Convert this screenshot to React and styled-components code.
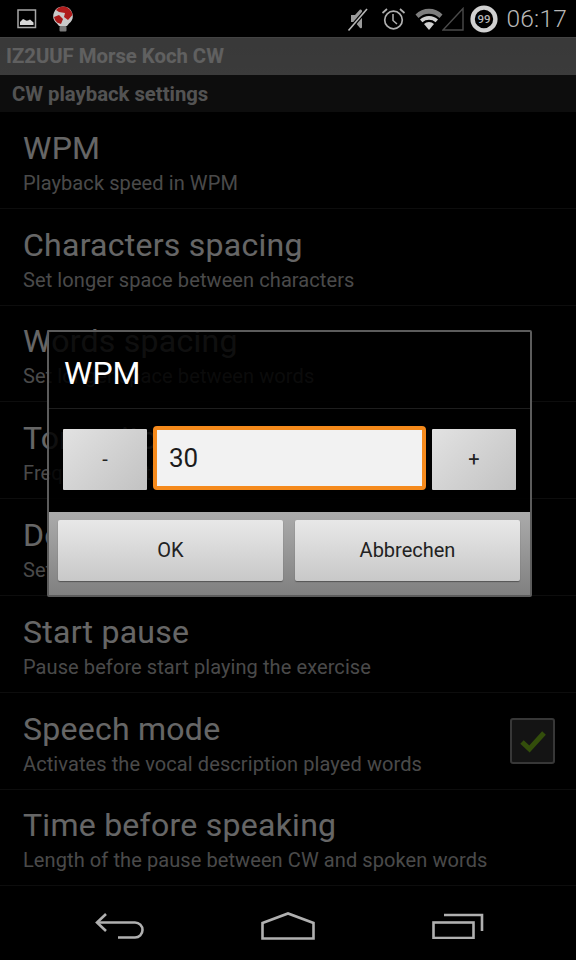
import React from "react";
import styled, { createGlobalStyle } from "styled-components";

const Global = createGlobalStyle`
  html, body { margin: 0; padding: 0; background: #000; }
  body { font-family: Roboto, "Noto Sans", sans-serif; }
  * { box-sizing: border-box; }
`;

const Screen = styled.div`
  width: 576px; height: 960px; display: flex; flex-direction: column;
  background: #000; overflow: hidden; position: relative;
`;
const StatusBar = styled.div`
  height: 37px; flex: none; display: flex; align-items: center; padding: 0 9px 0 17px;
`;
const StatusLeft = styled.div`
  display: flex; align-items: center; gap: 16px; flex: 1;
`;
const StatusRight = styled.div`
  display: flex; align-items: center; height: 37px;
`;
const Clock = styled.span`
  font-size: 24.5px; font-weight: 300; color: #b8b8b8; margin-left: 8px; letter-spacing: 0.2px; line-height: 37px;
`;
const Stage = styled.div`
  position: relative; flex: 1; display: flex; flex-direction: column; min-height: 0;
`;
const ActionBar = styled.div`
  height: 38px; flex: none; display: flex; align-items: center; padding-left: 6px;
  background: linear-gradient(#a8a8a8 0, #a8a8a8 1px, #8f8f8f 1px, #939393 100%);
  font-size: 20.3px; font-weight: 700; color: #f0f0f0;
`;
const Category = styled.div`
  height: 37px; flex: none; display: flex; align-items: center; padding-left: 12px;
  background: #222; font-size: 20.3px; font-weight: 700; color: #d0d0d0;
`;
const List = styled.div`
  flex: none; display: flex; flex-direction: column;
`;
const Row = styled.div`
  height: 96.8px; flex: none; display: flex; align-items: center; padding: 0 21px 0 23px;
  border-bottom: 1px solid #222;
`;
const RowText = styled.div`
  flex: 1; min-width: 0; display: flex; flex-direction: column; padding-top: 8px;
`;
const RowTitle = styled.div`
  font-size: 32px; line-height: 38px; letter-spacing: 0.26px; color: #fff; white-space: nowrap;
`;
const RowSub = styled.div`
  font-size: 20px; line-height: 32px; letter-spacing: 0.09px; color: #b8b8b8; white-space: nowrap;
`;
const CheckBox = styled.div`
  width: 45px; height: 46px; border: 2px solid #8a8a8a; border-radius: 3px;
  background: #333; display: flex; align-items: center; justify-content: center;
`;
const Dim = styled.div`
  position: absolute; inset: 0; background: rgba(0,0,0,0.6);
  display: flex; align-items: center; justify-content: center;
`;
const Dialog = styled.div`
  width: 485px; height: 267px; margin: 1px 0 0 3px; display: flex; flex-direction: column;
  border: 2px solid #5c5c5c; border-radius: 2px; background: rgba(0,0,0,0.85);
`;
const DialogTitle = styled.div`
  height: 77px; flex: none; display: flex; align-items: center; padding: 7px 0 0 15px;
  font-size: 32px; color: #fff; border-bottom: 1px solid #1e1e1e;
`;
const Stepper = styled.div`
  height: 103px; flex: none; display: flex; align-items: flex-end; padding: 0 14px 22px; gap: 6px;
`;
const StepButton = styled.div`
  width: 84px; height: 61px; flex: none; display: flex; align-items: center; justify-content: center;
  background: linear-gradient(135deg, #e2e2e2, #c2c2c2); border-radius: 1px;
  font-size: 20px; color: #222;
`;
const Field = styled.div`
  flex: 1; height: 64px; display: flex; align-items: center; padding-left: 12px;
  background: #f2f2f2; border: 4px solid #f58a1c; border-radius: 4px;
  font-size: 26px; color: #1c1c1c;
`;
const ButtonBar = styled.div`
  flex: 1; display: flex; gap: 12px; padding: 8px 10px 14px 9px;
  background: linear-gradient(#ababab, #808080);
`;
const DialogButton = styled.div`
  flex: 1; display: flex; align-items: center; justify-content: center;
  background: linear-gradient(#e8e8e8, #c8c8c8); border-radius: 2px;
  box-shadow: 0 1px 1px #555; font-size: 20px; color: #222;
`;
const NavBar = styled.div`
  height: 72px; flex: none; display: flex; align-items: center; justify-content: center; background: #000;
  padding: 3px 0 0 3px; gap: 116px;
`;

const Line = "#b0b0b0";

const rows = [
  ["WPM", "Playback speed in WPM"],
  ["Characters spacing", "Set longer space between characters"],
  ["Words spacing", "Set longer space between words"],
  ["Tone pitch", "Frequency of the tone"],
  ["Dot length", "Set dot length"],
  ["Start pause", "Pause before start playing the exercise"],
  ["Speech mode", "Activates the vocal description played words", true],
  ["Time before speaking", "Length of the pause between CW and spoken words"],
];

export default function App() {
  return (
    <Screen>
      <Global />
      <StatusBar>
        <StatusLeft>
          <svg width="20" height="20" viewBox="0 0 20 20" fill="none">
            <rect x="1" y="1" width="17.5" height="17.5" stroke="#a8a8a8" strokeWidth="1.5" />
            <path d="M3 15 L3 13 L6 10 C8 11 9 12 11 11.5 L13 10.5 L16.5 13.5 L16.5 16 L3 16Z" fill="#d8d8d8" />
          </svg>
          <svg width="20" height="26" viewBox="0 0 20 26">
            <path d="M10 .5 A9.5 9.5 0 0 1 16 17.5 L14 20 H6 L4 17.5 A9.5 9.5 0 0 1 10 .5Z" fill="#c9c9c9" />
            <path d="M10 .6 A9.5 9.5 0 0 1 19.4 9 L15 14 L11 11 L12 7 L6 6 L3 4 A9.5 9.5 0 0 1 10 .6Z" fill="#b01c1c" />
            <path d="M1 11 L6 9 L10 13 L8 18 L4 16.5 A9.5 9.5 0 0 1 1 11Z" fill="#a81818" />
            <rect x="6.5" y="20" width="7" height="5.5" rx="1" fill="#7a7a7a" />
          </svg>
        </StatusLeft>
        <StatusRight>
          <svg width="22" height="26" viewBox="0 0 22 26" fill="none" style={{ marginRight: 12 }}>
            <path d="M4 9 H8 L13 3.5 Q15 3 15 5 V21 Q15 23 13 22 L8 16 H4Z" fill="#9a9a9a" />
            <path d="M1.5 24.5 L20 3" stroke="#000" strokeWidth="4" />
            <path d="M1.5 24.5 L20 3" stroke="#b8b8b8" strokeWidth="1.6" />
          </svg>
          <svg width="25" height="24" viewBox="0 0 25 24" fill="none" style={{ marginRight: 9 }}>
            <circle cx="12.5" cy="13" r="8.8" stroke="#b0b0b0" strokeWidth="1.7" />
            <path d="M12 7 V13.5 L16 17" stroke="#b0b0b0" strokeWidth="1.5" />
            <path d="M1.5 6 L6 2 M19 2 L23.5 6" stroke="#b0b0b0" strokeWidth="1.7" />
          </svg>
          <svg width="28" height="24" viewBox="0 0 28 24" style={{ marginRight: -1 }}>
            <path d="M0.5 7.5 A19 19 0 0 1 27.5 7.5 L24.5 11 A15 15 0 0 0 3.5 11Z" fill="#7d7d7d" />
            <path d="M5 12.5 A13 13 0 0 1 23 12.5 L20.6 15.2 A10 10 0 0 0 7.4 15.2Z" fill="#d0d0d0" />
            <path d="M9 17 A7 7 0 0 1 19 17 L14 23Z" fill="#d0d0d0" />
          </svg>
          <svg width="22" height="24" viewBox="0 0 22 24" fill="none" style={{ marginRight: 6 }}>
            <path d="M1 23 L21 1.5 V23Z" stroke="#4a4a4a" strokeWidth="1.4" />
          </svg>
          <svg width="28" height="28" viewBox="0 0 28 28" fill="none">
            <circle cx="14" cy="14" r="11.4" stroke="#d0d0d0" strokeWidth="4.4" />
            <text x="14" y="18" textAnchor="middle" fontFamily="Roboto, sans-serif" fontSize="11.5" fontWeight="500" fill="#b4b4b4">99</text>
          </svg>
          <Clock>06:17</Clock>
        </StatusRight>
      </StatusBar>
      <Stage>
        <ActionBar>IZ2UUF Morse Koch CW</ActionBar>
        <Category>CW playback settings</Category>
        <List>
          {rows.map(([t, s, c]) => (
            <Row key={t}>
              <RowText>
                <RowTitle>{t}</RowTitle>
                <RowSub>{s}</RowSub>
              </RowText>
              {c && (
                <CheckBox>
                  <svg width="28" height="24" viewBox="0 0 28 24" fill="none">
                    <path d="M3 13 L10.5 20 L25 4" stroke="#7fc31c" strokeWidth="5" />
                  </svg>
                </CheckBox>
              )}
            </Row>
          ))}
        </List>
        <Dim>
          <Dialog>
            <DialogTitle>WPM</DialogTitle>
            <Stepper>
              <StepButton>-</StepButton>
              <Field>30</Field>
              <StepButton>+</StepButton>
            </Stepper>
            <ButtonBar>
              <DialogButton>OK</DialogButton>
              <DialogButton>Abbrechen</DialogButton>
            </ButtonBar>
          </Dialog>
        </Dim>
      </Stage>
      <NavBar>
        <svg width="50" height="26" viewBox="0 0 50 26" fill="none" stroke={Line} strokeWidth="2.6">
          <path d="M11 1 L2 9.5 L11 18" />
          <path d="M2 9.5 H40 A7.5 7.5 0 0 1 40 24.5 H23" />
        </svg>
        <svg width="54" height="28" viewBox="0 0 54 28" fill="none" stroke={Line} strokeWidth="2.6">
          <path d="M1.5 11 L27 1.5 L52.5 11 V26.5 H1.5Z" />
        </svg>
        <svg width="52" height="26" viewBox="0 0 52 26" fill="none" stroke={Line} strokeWidth="2.6" style={{ marginLeft: 1 }}>
          <path d="M12 2 H50 V18" />
          <rect x="1.5" y="9.5" width="40" height="15.5" />
        </svg>
      </NavBar>
    </Screen>
  );
}
